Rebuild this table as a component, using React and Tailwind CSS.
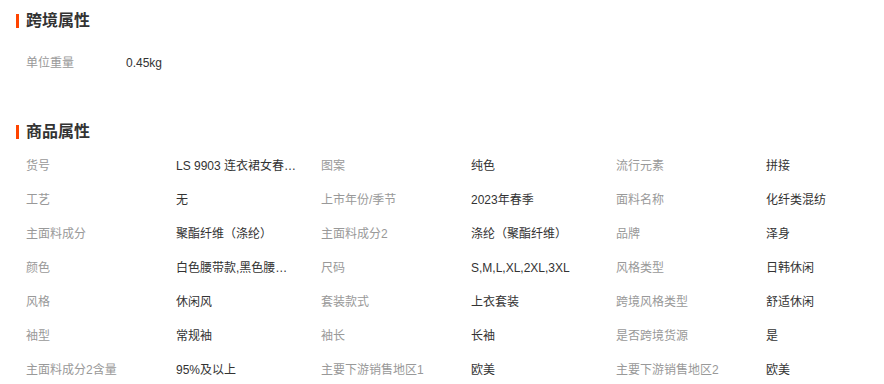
import React from "react";

const rows = [
  [["货号", "LS 9903 连衣裙女春季新款"], ["图案", "纯色"], ["流行元素", "拼接"]],
  [["工艺", "无"], ["上市年份/季节", "2023年春季"], ["面料名称", "化纤类混纺"]],
  [["主面料成分", "聚酯纤维（涤纶）"], ["主面料成分2", "涤纶（聚酯纤维）"], ["品牌", "泽身"]],
  [["颜色", "白色腰带款,黑色腰带款"], ["尺码", "S,M,L,XL,2XL,3XL"], ["风格类型", "日韩休闲"]],
  [["风格", "休闲风"], ["套装款式", "上衣套装"], ["跨境风格类型", "舒适休闲"]],
  [["袖型", "常规袖"], ["袖长", "长袖"], ["是否跨境货源", "是"]],
  [["主面料成分2含量", "95%及以上"], ["主要下游销售地区1", "欧美"], ["主要下游销售地区2", "欧美"]],
];

function Heading({ children }) {
  return (
    <div className="flex h-[28px] items-center pl-[16px]">
      <div className="h-[14px] w-[3px] bg-[#ff4400]" />
      <div className="ml-[7px] text-[16px] font-bold leading-none text-[#333333]">{children}</div>
    </div>
  );
}

function Cell({ label, value }) {
  return (
    <div className="flex w-[295px] shrink-0 items-center">
      <div className="w-[150px] shrink-0 text-[#999999]">{label}</div>
      <div className="max-w-[121px] truncate text-[#333333]">{value}</div>
    </div>
  );
}

export default function App() {
  return (
    <div
      className="h-[384px] w-[884px] overflow-hidden bg-white pt-[7px] text-[12px]"
      style={{ fontFamily: '"Liberation Sans", "Noto Sans CJK SC", sans-serif' }}
    >
      <Heading>跨境属性</Heading>
      <div className="mt-[11px] pl-[26px]">
        <div className="flex h-[34px] items-center">
          <div className="w-[100px] text-[#999999]">单位重量</div>
          <div className="text-[#333333]">0.45kg</div>
        </div>
      </div>
      <div className="mt-[38px]">
        <Heading>商品属性</Heading>
      </div>
      <div className="mt-[3px] pl-[26px]">
        {rows.map((r, i) => (
          <div key={i} className="flex h-[34px] items-center">
            {r.map(([l, v]) => (
              <Cell key={l} label={l} value={v} />
            ))}
          </div>
        ))}
      </div>
    </div>
  );
}
